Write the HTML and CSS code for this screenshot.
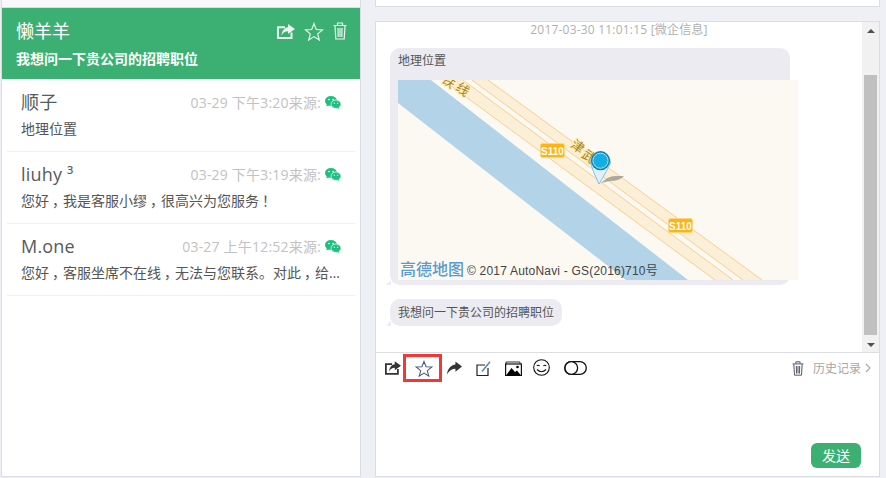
FILE: index.html
```html
<!DOCTYPE html>
<html lang="zh">
<head>
<meta charset="utf-8">
<title>会话</title>
<link rel="stylesheet" href="styles.css">
</head>
<body>
<svg class="defs" width="0" height="0" aria-hidden="true">
  <symbol id="i-share" viewBox="0 0 18 15">
    <path d="M8 3.2H1v10.800h13.500V8.500" fill="none" stroke="currentColor" stroke-width="2"/>
    <path d="M11 0l7 5-7 5V7.200C8 7.200 6 8.400 4.500 11.500 5 6.500 7.500 3.600 11 3.200z" fill="currentColor"/>
  </symbol>
  <symbol id="i-star" viewBox="0 0 20 19">
    <path d="M10 1.600l2.300 5.900 6.300.4-4.900 4 1.600 6.100L10 14.600l-5.300 3.400 1.600-6.100-4.900-4 6.300-.4z" fill="none" stroke="currentColor" stroke-width="1.200"/>
  </symbol>
  <symbol id="i-trash" viewBox="0 0 14 18">
    <path d="M.5 3.500h13M4.500 3V1h5v2M2 4l.8 13h8.400L12 4M5 6l.2 9M7 6v9M9 6l-.2 9" fill="none" stroke="currentColor" stroke-width="1.200"/>
  </symbol>
  <symbol id="i-wechat" viewBox="0 0 16 13">
    <ellipse cx="6" cy="5" rx="6" ry="5" fill="#1fbf7f"/>
    <path d="M2 8l-.6 2.600L5 9z" fill="#1fbf7f"/>
    <ellipse cx="11" cy="8.200" rx="5" ry="4.200" fill="#1fbf7f" stroke="#fff" stroke-width=".7"/>
    <path d="M13.500 11l.8 2-2.600-1.200z" fill="#1fbf7f"/>
    <circle cx="4" cy="3.600" r=".8" fill="#fff"/><circle cx="8" cy="3.600" r=".8" fill="#fff"/>
    <circle cx="9.300" cy="7.200" r=".6" fill="#fff"/><circle cx="12.700" cy="7.200" r=".6" fill="#fff"/>
  </symbol>
</svg>

<aside class="left">
  <div class="strip"></div>
  <header class="active">
    <div class="active-top">
      <span class="active-name">懒羊羊</span>
      <span class="active-tools">
        <svg class="ic-share-lg"><use href="#i-share"/></svg>
        <svg class="ic-star-lg"><use href="#i-star"/></svg>
        <svg class="ic-trash-lg"><use href="#i-trash"/></svg>
      </span>
    </div>
    <div class="active-msg">我想问一下贵公司的招聘职位</div>
  </header>
  <ul class="list">
    <li class="row">
      <div class="row-top"><span class="name">顺子</span><span class="meta">03-29 下午3:20来源:<svg class="ic-wechat"><use href="#i-wechat"/></svg></span></div>
      <div class="msg">地理位置</div>
    </li>
    <li class="row">
      <div class="row-top"><span class="name">liuhy ³</span><span class="meta">03-29 下午3:19来源:<svg class="ic-wechat"><use href="#i-wechat"/></svg></span></div>
      <div class="msg">您好<span class="cp">，</span>我是客服小缪<span class="cp">，</span>很高兴为您服务<span class="cp">！</span></div>
    </li>
    <li class="row">
      <div class="row-top"><span class="name">M.one</span><span class="meta">03-27 上午12:52来源:<svg class="ic-wechat"><use href="#i-wechat"/></svg></span></div>
      <div class="msg">您好<span class="cp">，</span>客服坐席不在线<span class="cp">，</span>无法与您联系。对此<span class="cp">，</span>给您带来不便，敬请谅解。</div>
    </li>
  </ul>
</aside>

<main class="right">
  <div class="right-strip"></div>
  <section class="panel">
    <div class="history">
      <div class="messages">
        <div class="stamp">2017-03-30 11:01:15 [微企信息]</div>
        <div class="bubble bubble-map">
          <div class="bubble-text">地理位置</div>
          <svg class="map" viewBox="398 80 400 200" width="400" height="200">
            <rect x="398" y="80" width="400" height="200" fill="#fcf9f2"/>
            <polygon points="398,80 431,80 688,280 626,280 398,103" fill="#b3d3e9"/>
            <polygon points="488,80 472,80 743,280 762,280" fill="#fbefd8"/>
            <polygon points="463,80 443,80 715,280 733,280" fill="#fbefd8"/>
            <g stroke="#f8cf93" stroke-width="1">
              <line x1="488" y1="80" x2="762" y2="280"/>
              <line x1="472" y1="80" x2="743" y2="280"/>
              <line x1="463" y1="80" x2="733" y2="280"/>
              <line x1="443" y1="80" x2="715" y2="280"/>
            </g>
            <g class="road-name">
              <text transform="translate(449 81) rotate(36)">铁</text>
              <text transform="translate(463 89) rotate(36)">线</text>
              <text transform="translate(578 146) rotate(36)">津</text>
              <text transform="translate(589 156) rotate(36)">武</text>
            </g>
            <g class="shield">
              <rect x="540.500" y="143.500" width="24" height="14" rx="2"/>
              <text x="552.500" y="154.500">S110</text>
            </g>
            <g class="shield">
              <rect x="668.500" y="218.500" width="24" height="14" rx="2"/>
              <text x="680.500" y="229.500">S110</text>
            </g>
            <path d="M601 183Q608 176 615 176L624 176Q620 181 610 181z" fill="#8b8b88" opacity=".7"/>
            <path d="M590.500 163A10 10 0 1 1 610.500 163Q608 169 599 184Q593 172 590.500 163z" fill="#dff0f8" stroke="#6ab6dc" stroke-width=".8"/>
            <circle cx="600.500" cy="160.700" r="9.600" fill="#0f7fb0"/>
            <circle cx="600.500" cy="160.700" r="7.600" fill="#14aee4" stroke="#d9f0f8" stroke-width=".8"/>
            <text class="gaode" x="400" y="275">高德地图</text>
            <text class="copy" x="467" y="275">© 2017 AutoNavi - GS(2016)710号</text>
          </svg>
        </div>
        <div class="bubble bubble-line">我想问一下贵公司的招聘职位</div>
      </div>
      <div class="scrollbar">
        <span class="arrow-up"></span>
        <span class="thumb"></span>
        <span class="arrow-down"></span>
      </div>
    </div>
    <div class="compose">
      <div class="toolbar">
        <svg class="t-share"><use href="#i-share"/></svg>
        <svg class="t-star"><use href="#i-star"/></svg>
        <svg class="t-forward" viewBox="0 0 16 14"><path d="M9 0l7 5.500-7 5.500V7.800C5.500 7.800 2.500 9.500 0 14 .5 7.500 4.500 3.800 9 3.200z" fill="#333"/></svg>
        <svg class="t-edit" viewBox="0 0 15 15"><path d="M9 4H1v10.500h11V7" fill="none" stroke="#222" stroke-width="1.200"/><path d="M6 10.500L14 .8" stroke="#5b84b1" stroke-width="1.500"/></svg>
        <svg class="t-pic" viewBox="0 0 17 15"><path d="M1 3V1h14v2" fill="none" stroke="#333" stroke-width="1"/><rect x=".6" y="3" width="15.800" height="11.500" fill="#fff" stroke="#111" stroke-width="1.200"/><path d="M1 14.500L6.500 7l3.500 4 2-1.500 4 5z" fill="#000"/><circle cx="12.500" cy="6" r="1.300" fill="#000"/></svg>
        <svg class="t-smile" viewBox="0 0 17 17"><circle cx="8.500" cy="8.500" r="7.800" fill="none" stroke="#111" stroke-width="1.100"/><path d="M3.800 7q1.400-1.600 2.800 0M10.400 7q1.400-1.600 2.800 0M4 10.500q4.500 4.500 9 0" fill="none" stroke="#111" stroke-width="1.100"/></svg>
        <svg class="t-toggle" viewBox="0 0 23 14"><rect x=".7" y=".7" width="21.600" height="12.600" rx="6.300" fill="none" stroke="#111" stroke-width="1.300"/><circle cx="7.300" cy="7" r="6.300" fill="#fff" stroke="#111" stroke-width="1.300"/></svg>
        <div class="tools-right">
          <svg class="t-trash"><use href="#i-trash"/></svg>
          <span class="hist-link">历史记录</span>
          <svg class="t-chev" viewBox="0 0 6 10"><path d="M1 1l4 4-4 4" fill="none" stroke="#aaa" stroke-width="1.200"/></svg>
        </div>
        <span class="mark"></span>
      </div>
      <button class="send" type="button">发送</button>
    </div>
  </section>
</main>
</body>
</html>
```
FILE: styles.css
```css
* { box-sizing: border-box; }
html, body { height: 100%; }
body {
  margin: 0;
  padding-left: 1px;
  height: 478px;
  overflow: hidden;
  display: flex;
  align-items: flex-start;
  background: #eff0f6;
  font-family: "Open Sans", "Noto Sans CJK SC", sans-serif;
  color: #555;
}
.defs { position: absolute; }
svg { display: block; flex: none; }

.left {
  width: 360px;
  height: 477px;
  background: #fff;
  border: 1px solid #dcdde3;
  border-top: 0;
}
.strip {
  height: 8px;
  background: #f8f8fa;
  border-bottom: 1px solid #dcdde3;
}
.active {
  height: 71px;
  background: #3cb073;
  color: #fff;
  padding: 9px 13px 0 14px;
}
.active-top { display: flex; justify-content: space-between; align-items: center; height: 28px; }
.active-name { font-size: 18px; line-height: 28px; }
.active-tools { display: flex; align-items: center; gap: 9px; color: #eaf6ef; }
.ic-share-lg { width: 18px; height: 15px; }
.ic-star-lg { width: 20px; height: 19px; }
.ic-trash-lg { width: 14px; height: 18px; }
.active-msg { font-size: 14px; font-weight: 700; line-height: 20px; margin-top: 4px; }

.list { list-style: none; margin: 0 5px; padding: 1px 0 0; }
.row {
  height: 72px;
  padding: 10px 14px 0;
  border-bottom: 1px solid #f0f0f2;
}
.row-top { display: flex; justify-content: space-between; align-items: center; height: 24px; }
.name { font-size: 18px; line-height: 24px; color: #555b61; letter-spacing: .2px; }
.meta { display: flex; align-items: center; gap: 4px; font-size: 14px; color: #c2c2c2; letter-spacing: .2px; }
.ic-wechat { width: 16px; height: 13px; }
.msg {
  font-size: 14px;
  line-height: 22px;
  margin-top: 4px;
  color: #555;
  white-space: nowrap;
  overflow: hidden;
  text-overflow: ellipsis;
}
.cp { margin-left: 3px; margin-right: -3px; }

.right { width: 505px; margin-left: 14px; }
.right-strip {
  height: 7px;
  background: #fff;
  border: 1px solid #dcdde3;
  border-top: 0;
}
.panel {
  margin-top: 14px;
  height: 456px;
  background: #fff;
  border: 1px solid #dcdde3;
  display: flex;
  flex-direction: column;
}
.history { height: 330px; display: flex; }
.messages { width: 486px; overflow: hidden; padding-left: 14px; }
.stamp {
  margin-left: -14px;
  text-align: center;
  font-size: 12px;
  line-height: 16px;
  letter-spacing: .2px;
  color: #b0b0b0;
  height: 26px;
}
.bubble {
  position: relative;
  background: #ebebf1;
  border-radius: 10px;
  font-size: 12px;
  color: #555;
}
.bubble::before {
  content: "";
  position: absolute;
  left: -4px;
  bottom: 0;
  width: 5px;
  height: 5px;
  background: #ebebf1;
  clip-path: polygon(100% 0, 100% 100%, 0 100%);
}
.bubble-map { width: 400px; height: 237px; padding: 4px 8px 0; }
.bubble-text { height: 28px; line-height: 18px; }
.map { width: 400px; height: 200px; max-width: none; overflow: hidden; }
.road-name text {
  font-size: 13px;
  fill: #a97f2e;
  stroke: #fdf2b4;
  stroke-width: 2px;
  paint-order: stroke;
  text-anchor: middle;
  dominant-baseline: central;
}
.shield rect { fill: #fdb414; stroke: #fed77c; stroke-width: 1; }
.shield text {
  font-family: "Liberation Sans", sans-serif;
  font-size: 10px;
  font-weight: 700;
  fill: #fff;
  text-anchor: middle;
}
.gaode { font-family: "Noto Sans CJK SC", sans-serif; font-size: 16px; font-weight: 500; fill: #5a9bd0; }
.copy { font-family: "Liberation Sans", "Noto Sans CJK SC", sans-serif; font-size: 12px; letter-spacing: .2px; fill: #444; }
.bubble-line {
  display: inline-block;
  margin-top: 14px;
  padding: 0 8px;
  height: 27px;
  line-height: 27px;
}

.scrollbar {
  width: 17px;
  background: #f1f1f1;
  display: flex;
  flex-direction: column;
  align-items: center;
}
.arrow-up, .arrow-down { width: 0; height: 0; border: 4px solid transparent; flex: none; }
.arrow-up { border-top: 0; border-bottom: 4px solid #505050; margin-top: 7px; }
.arrow-down { border-bottom: 0; border-top: 4px solid #505050; margin-top: 8px; }
.thumb { width: 13px; height: 260px; margin-top: 42px; background: #c0c0c0; flex: none; }

.compose {
  flex: 1;
  border-top: 1px solid #dcdde3;
  display: flex;
  flex-direction: column;
}
.toolbar {
  position: relative;
  display: flex;
  align-items: center;
  gap: 14px;
  height: 30px;
  padding: 0 8px 0 9px;
  color: #333;
}
.t-share { width: 16px; height: 14px; }
.t-star { width: 18px; height: 17px; color: #4a5a7a; }
.t-forward { width: 15px; height: 14px; }
.t-edit { width: 15px; height: 15px; }
.t-pic { width: 17px; height: 15px; }
.t-smile { width: 17px; height: 17px; margin-left: -3px; margin-top: -2px; }
.t-toggle { width: 23px; height: 14px; }
.tools-right { margin-left: auto; display: flex; align-items: center; color: #556; }
.t-trash { width: 12px; height: 15px; margin-right: 9px; }
.hist-link { font-size: 12px; color: #a6a6a6; }
.t-chev { width: 6px; height: 10px; margin-left: 4px; }
.mark {
  position: absolute;
  left: 27px;
  top: 1px;
  width: 39px;
  height: 28px;
  border: 3px solid #f33636;
}
.send {
  margin: auto 18px 8px auto;
  width: 50px;
  height: 25px;
  padding: 0;
  border: 0;
  border-radius: 6px;
  background: #3cb073;
  color: #fff;
  font: 14px/25px "Open Sans", "Noto Sans CJK SC", sans-serif;
}
```
